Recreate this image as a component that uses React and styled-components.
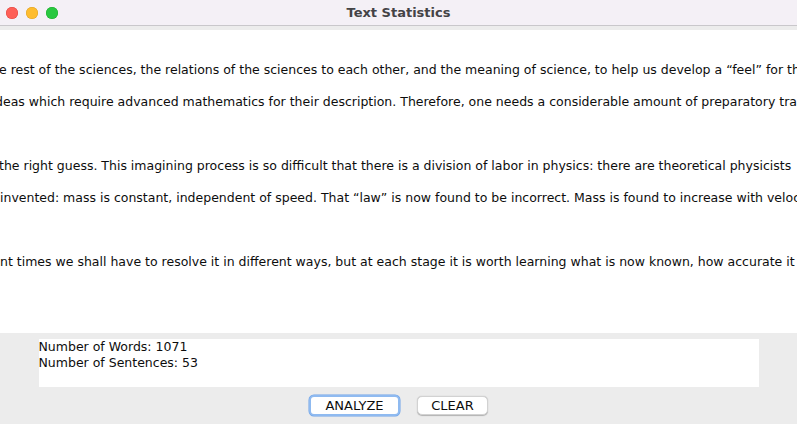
import React from "react";
import styled, { createGlobalStyle } from "styled-components";

const GlobalStyle = createGlobalStyle`
  html, body {
    margin: 0;
    padding: 0;
    height: 100%;
    overflow: hidden;
  }
  #root {
    height: 100%;
  }
`;

const Window = styled.div`
  width: 797px;
  height: 424px;
  display: flex;
  flex-direction: column;
  background: #ececec;
  font-family: "DejaVu Sans", "Liberation Sans", sans-serif;
  overflow: hidden;
`;

const TitleBar = styled.div`
  height: 25px;
  flex: none;
  display: flex;
  align-items: center;
  position: relative;
  background: #f4f0f6;
  border-bottom: 1px solid #c9c7cb;
`;

const Lights = styled.div`
  display: flex;
  gap: 8px;
  padding-left: 6px;
`;

const Light = styled.span`
  width: 12px;
  height: 12px;
  border-radius: 50%;
  background: ${(p) => p.$color};
  box-shadow: inset 0 0 0 0.5px ${(p) => p.$edge};
`;

const Title = styled.div`
  position: absolute;
  left: 0;
  right: 0;
  text-align: center;
  font-size: 13px;
  font-weight: bold;
  color: #444346;
  pointer-events: none;
`;

const TextPane = styled.div`
  margin-top: 4px;
  height: 303px;
  flex: none;
  background: #ffffff;
  overflow: hidden;
  padding-top: 24px;
  box-sizing: border-box;
`;

const Line = styled.div`
  height: 32px;
  line-height: 32px;
  white-space: nowrap;
  font-size: 12.5px;
  color: #0d0d0d;
  margin-left: ${(p) => -(p.$shift || 0)}px;
`;

const Bottom = styled.div`
  flex: 1;
  display: flex;
  flex-direction: column;
  align-items: center;
  padding-top: 6px;
`;

const Result = styled.div`
  width: 720px;
  height: 48px;
  background: #ffffff;
  font-size: 12.5px;
  line-height: 16px;
  color: #0d0d0d;
  box-sizing: border-box;
`;

const Buttons = styled.div`
  display: flex;
  gap: 17px;
  margin-top: 8px;
  align-items: center;
`;

const Button = styled.button`
  font-family: "DejaVu Sans", "Liberation Sans", sans-serif;
  font-size: 13px;
  color: #0d0d0d;
  background: #ffffff;
  border-radius: 5px;
  padding: 0;
  height: ${(p) => (p.$focused ? "21px" : "19px")};
  width: ${(p) => p.$width}px;
  border: ${(p) =>
    p.$focused ? "2px solid #8fbaf0" : "1px solid #d2d2d2"};
  box-shadow: ${(p) =>
    p.$focused ? "0 0 0 0.5px #6ea2e8" : "0 0.5px 1px rgba(0,0,0,0.25)"};
  box-sizing: border-box;
`;

const lines = [
  { shift: 1, text: "e rest of the sciences, the relations of the sciences to each other, and the meaning of science, to help us develop a \u201cfeel\u201d for the subject." },
  { shift: 5, text: "deas which require advanced mathematics for their description. Therefore, one needs a considerable amount of preparatory training." },
  { shift: 0, text: "" },
  { shift: 1, text: "the right guess. This imagining process is so difficult that there is a division of labor in physics: there are theoretical physicists" },
  { shift: 0, text: " invented: mass is constant, independent of speed. That \u201claw\u201d is now found to be incorrect. Mass is found to increase with velocity" },
  { shift: 0, text: "" },
  { shift: 0, text: "nt times we shall have to resolve it in different ways, but at each stage it is worth learning what is now known, how accurate it is" },
];

export default function App() {
  return (
    <React.Fragment>
      <GlobalStyle />
      <Window>
        <TitleBar>
          <Lights>
            <Light $color="#fe5f57" $edge="#e0443e" />
            <Light $color="#febc2e" $edge="#dea123" />
            <Light $color="#28c840" $edge="#1aab29" />
          </Lights>
          <Title>Text Statistics</Title>
        </TitleBar>
        <TextPane>
          {lines.map((line, index) => (
            <Line key={index} $shift={line.shift}>
              {line.text || "\u00a0"}
            </Line>
          ))}
        </TextPane>
        <Bottom>
          <Result>
            Number of Words: 1071
            <br />
            Number of Sentences: 53
          </Result>
          <Buttons>
            <Button $focused $width={91}>ANALYZE</Button>
            <Button $width={71}>CLEAR</Button>
          </Buttons>
        </Bottom>
      </Window>
    </React.Fragment>
  );
}
